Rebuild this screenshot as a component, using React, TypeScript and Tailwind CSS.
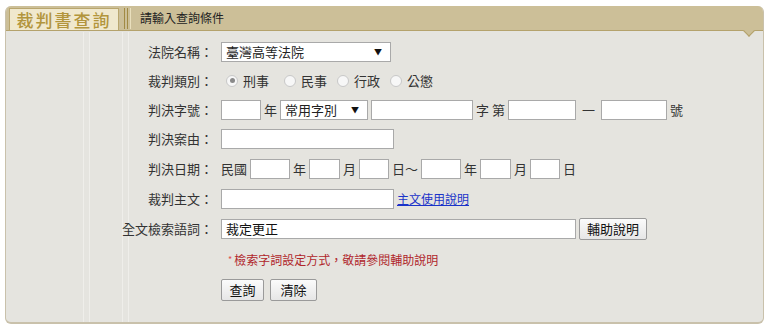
import React from "react";

const font = { fontFamily: '"Noto Sans CJK TC", "Noto Sans", sans-serif' };

function Box({ w, value }: { w: string; value?: string }) {
  return (
    <input
      defaultValue={value}
      className={`h-[20px] ${w} border border-[#a9a9a9] bg-white px-1 text-[13px] text-[#111] outline-none`}
    />
  );
}

function Select({ w, value }: { w: string; value: string }) {
  return (
    <div className={`flex h-[20px] ${w} items-center justify-between border border-[#a9a9a9] bg-white pl-1 pr-[8px] text-[13px] text-[#222]`}>
      <span>{value}</span>
      <span className="text-[8px] text-[#111]">▼</span>
    </div>
  );
}

function Radio({ checked, label, extra }: { checked?: boolean; label: string; extra?: string }) {
  return (
    <span className={`flex items-center gap-[5px] ${extra ?? ""}`}>
      <span className="flex h-[12px] w-[12px] items-center justify-center rounded-full border border-[#c8c8c8] bg-[#f7f7f7]">
        {checked && <span className="h-[5px] w-[5px] rounded-full bg-[#8a8a8a]" />}
      </span>
      <span>{label}</span>
    </span>
  );
}

function Row({ label, h, children }: { label: string; h: string; children?: React.ReactNode }) {
  return (
    <div className={`flex ${h} items-center`}>
      <div className="w-[215px] shrink-0 pr-[8px] text-right">{label}</div>
      <div className="flex items-center gap-[3px]">{children}</div>
    </div>
  );
}

function Btn({ children, w }: { children: React.ReactNode; w: string }) {
  return (
    <button className={`h-[22px] ${w} rounded-[2px] border border-[#9a9a9a] bg-gradient-to-b from-[#fbfbfb] to-[#e6e6e6] text-[13px] text-[#111]`}>
      {children}
    </button>
  );
}

export default function App() {
  return (
    <div className="h-[331px] w-[770px] bg-white pl-[5px] pr-[6px] pt-[6px] text-[13px] text-[#333]" style={font}>
      <div className="relative overflow-hidden rounded-[6px] border-b-2 border-l border-r border-[#c9c1ab] bg-[#e5e4df]">
        <div className="relative flex h-[25px] items-end border-b border-[#b4a26c] bg-[#ccbf98] pl-[3px]">
          <div className="flex h-[22px] w-[110px] items-center justify-center border border-b-0 border-[#b9a66e] bg-[#f0e8cd] text-[17px] font-medium tracking-[2px] text-[#b2953c]">
            裁判書查詢
          </div>
          <div className="mb-[1px] ml-[5px] flex h-[21px] gap-[2px]">
            <span className="w-[1px] bg-[#a18a44]" />
            <span className="w-[1px] bg-[#a18a44]" />
            <span className="w-[1px] bg-[#e9dfbd]" />
          </div>
          <div className="mb-[3px] ml-[9px] text-[12px] text-[#222]">請輸入查詢條件</div>
          <span className="absolute bottom-[-5px] right-[10px] h-[8px] w-[8px] rotate-45 border-b border-r border-[#b4a26c] bg-[#ccbf98]" />
        </div>
        <div className="pointer-events-none absolute bottom-0 top-[26px] left-[77px] w-[1px] bg-[#efeeea]" />
        <div className="pointer-events-none absolute bottom-0 top-[26px] left-[83px] w-[1px] bg-[#efeeea]" />
        <div className="pointer-events-none absolute bottom-0 top-[26px] left-[116px] w-[1px] bg-[#efeeea]" />
        <div className="pointer-events-none absolute bottom-0 top-[26px] left-[122px] w-[1px] bg-[#efeeea]" />
        <div className="relative pb-[17px] pt-[6px]">
          <Row label="法院名稱：" h="h-[29px]">
            <Select w="w-[170px]" value="臺灣高等法院" />
          </Row>
          <Row label="裁判類別：" h="h-[29px]">
            <div className="flex items-center gap-[10px] pl-[5px]">
              <Radio checked label="刑事" extra="mr-[5px]" />
              <Radio label="民事" />
              <Radio label="行政" />
              <Radio label="公懲" />
            </div>
          </Row>
          <Row label="判決字號：" h="h-[29px]">
            <Box w="w-[40px]" />
            <span>年</span>
            <Select w="w-[88px]" value="常用字別" />
            <Box w="w-[102px]" />
            <span>字 第</span>
            <Box w="w-[68px]" />
            <span className="px-[3px]">一</span>
            <Box w="w-[66px]" />
            <span>號</span>
          </Row>
          <Row label="判決案由：" h="h-[30px]">
            <Box w="w-[173px]" />
          </Row>
          <Row label="判決日期：" h="h-[30px]">
            <span>民國</span>
            <Box w="w-[40px]" />
            <span>年</span>
            <Box w="w-[31px]" />
            <span>月</span>
            <Box w="w-[30px]" />
            <span>日～</span>
            <Box w="w-[40px]" />
            <span>年</span>
            <Box w="w-[31px]" />
            <span>月</span>
            <Box w="w-[30px]" />
            <span>日</span>
          </Row>
          <Row label="裁判主文：" h="h-[29px]">
            <Box w="w-[173px]" />
            <a className="text-[12px] text-[#1a33c9] underline">主文使用說明</a>
          </Row>
          <Row label="全文檢索語詞：" h="h-[31px]">
            <Box w="w-[355px]" value="裁定更正" />
            <Btn w="w-[68px]">輔助說明</Btn>
          </Row>
          <div className="flex h-[31px] items-center pl-[222px] text-[12px] text-[#b0262b]">
            <span className="mr-[2px] text-[9px] text-[#e05050]">*</span>檢索字詞設定方式，敬請參閱輔助說明
          </div>
          <div className="flex h-[30px] items-center gap-[6px] pl-[215px]">
            <Btn w="w-[43px]">查詢</Btn>
            <Btn w="w-[47px]">清除</Btn>
          </div>
        </div>
      </div>
    </div>
  );
}
